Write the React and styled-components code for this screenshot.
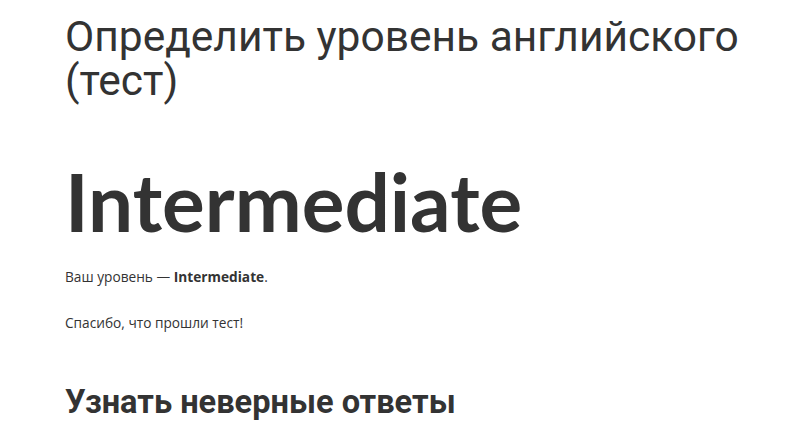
import React from 'react'
import styled, { createGlobalStyle } from 'styled-components'

const GlobalStyle = createGlobalStyle`
  body {
    margin: 0;
    background: #fff;
    color: #333;
    font-family: Lato, "Open Sans", sans-serif;
  }
`

const App = () => {
  return (
    <>
      <GlobalStyle />
      <Wrapper>
        <Title>Определить уровень английского (тест)</Title>
        <Level>Intermediate</Level>
        <Text>
          Ваш уровень — <strong>Intermediate</strong>.
        </Text>
        <Text>Спасибо, что прошли тест!</Text>
        <SubTitle>Узнать неверные ответы</SubTitle>
      </Wrapper>
    </>
  )
}

export default App

const Wrapper = styled.main`
  padding: 15px 40px 0 65px;
  max-width: 707px;
`

const Title = styled.h1`
  margin: 0;
  font-family: Roboto, "Liberation Sans", sans-serif;
  font-weight: 400;
  font-size: 42.5px;
  line-height: 44px;
  color: #333;
`

const Level = styled.h2`
  margin: 48px 0 0;
  font-family: Lato, sans-serif;
  font-weight: 700;
  font-size: 80px;
  line-height: 100px;
  color: #333;
`

const Text = styled.p`
  margin: 16px 0 0;
  font-family: "Open Sans", sans-serif;
  font-size: 13.7px;
  line-height: 20px;
  color: #333;

  & + & {
    margin-top: 26px;
  }

  strong {
    font-weight: 700;
  }
`

const SubTitle = styled.h3`
  margin: 50px 0 0;
  font-family: Roboto, sans-serif;
  font-weight: 700;
  font-size: 32.6px;
  line-height: 38px;
  color: #333;
`
